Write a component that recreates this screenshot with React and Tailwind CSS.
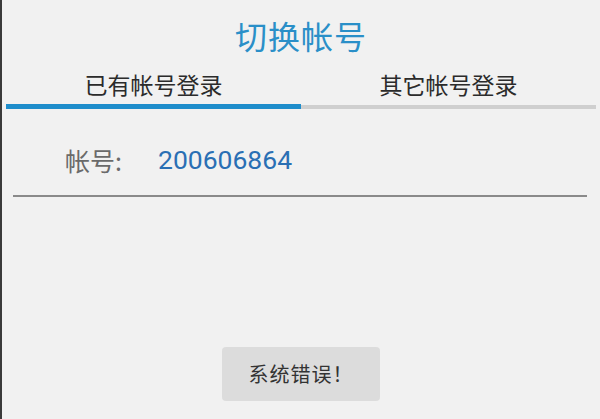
const App = () => {
    return (
        <div
            className="w-[600px] h-[419px] bg-[#f1f1f1] border-l-2 border-[#3a3a3a] flex flex-col overflow-hidden"
            style={{ fontFamily: '"Noto Sans CJK SC", "Liberation Sans", sans-serif' }}
        >
            {/* title */}
            <div className="h-[68px] flex items-center justify-center">
                <h1 className="text-[32px] leading-none text-[#2a8fc8] tracking-[1px] pt-[2px]">切换帐号</h1>
            </div>

            {/* tabs */}
            <div className="flex px-[4px]">
                <div className="flex-1 flex flex-col items-center">
                    <span className="text-[23px] leading-none text-[#2b2b2b] h-[36px] pt-[5px]">已有帐号登录</span>
                    <div className="w-full h-[5px] bg-[#1e8dcb]" />
                </div>
                <div className="flex-1 flex flex-col items-center">
                    <span className="text-[23px] leading-none text-[#2b2b2b] h-[36px] pt-[5px]">其它帐号登录</span>
                    <div className="w-full h-[4px] mt-[1px] bg-[#cfcfcf]" />
                </div>
            </div>

            {/* account */}
            <div className="ml-[11px] mr-[13px] mt-[39px] h-[49px] border-b-2 border-[#8a8a8a] flex items-start pl-[52px]">
                <span className="text-[25px] leading-none text-[#6a6a6a] w-[93px]">帐号:</span>
                <span
                    className="text-[26.5px] leading-none text-[#2a6fb4] -mt-[1px]"
                    style={{ fontFamily: '"Roboto", "Liberation Sans", sans-serif' }}
                >200606864</span>
            </div>

            {/* toast */}
            <div className="flex-1 flex items-end justify-center pb-[18px]">
                <div className="w-[158px] h-[54px] rounded-[4px] bg-[#dcdcdc] flex items-center justify-center">
                    <span className="text-[20px] text-[#333333] tracking-[1px]">系统错误！</span>
                </div>
            </div>
        </div>
    );
};

export default App;
